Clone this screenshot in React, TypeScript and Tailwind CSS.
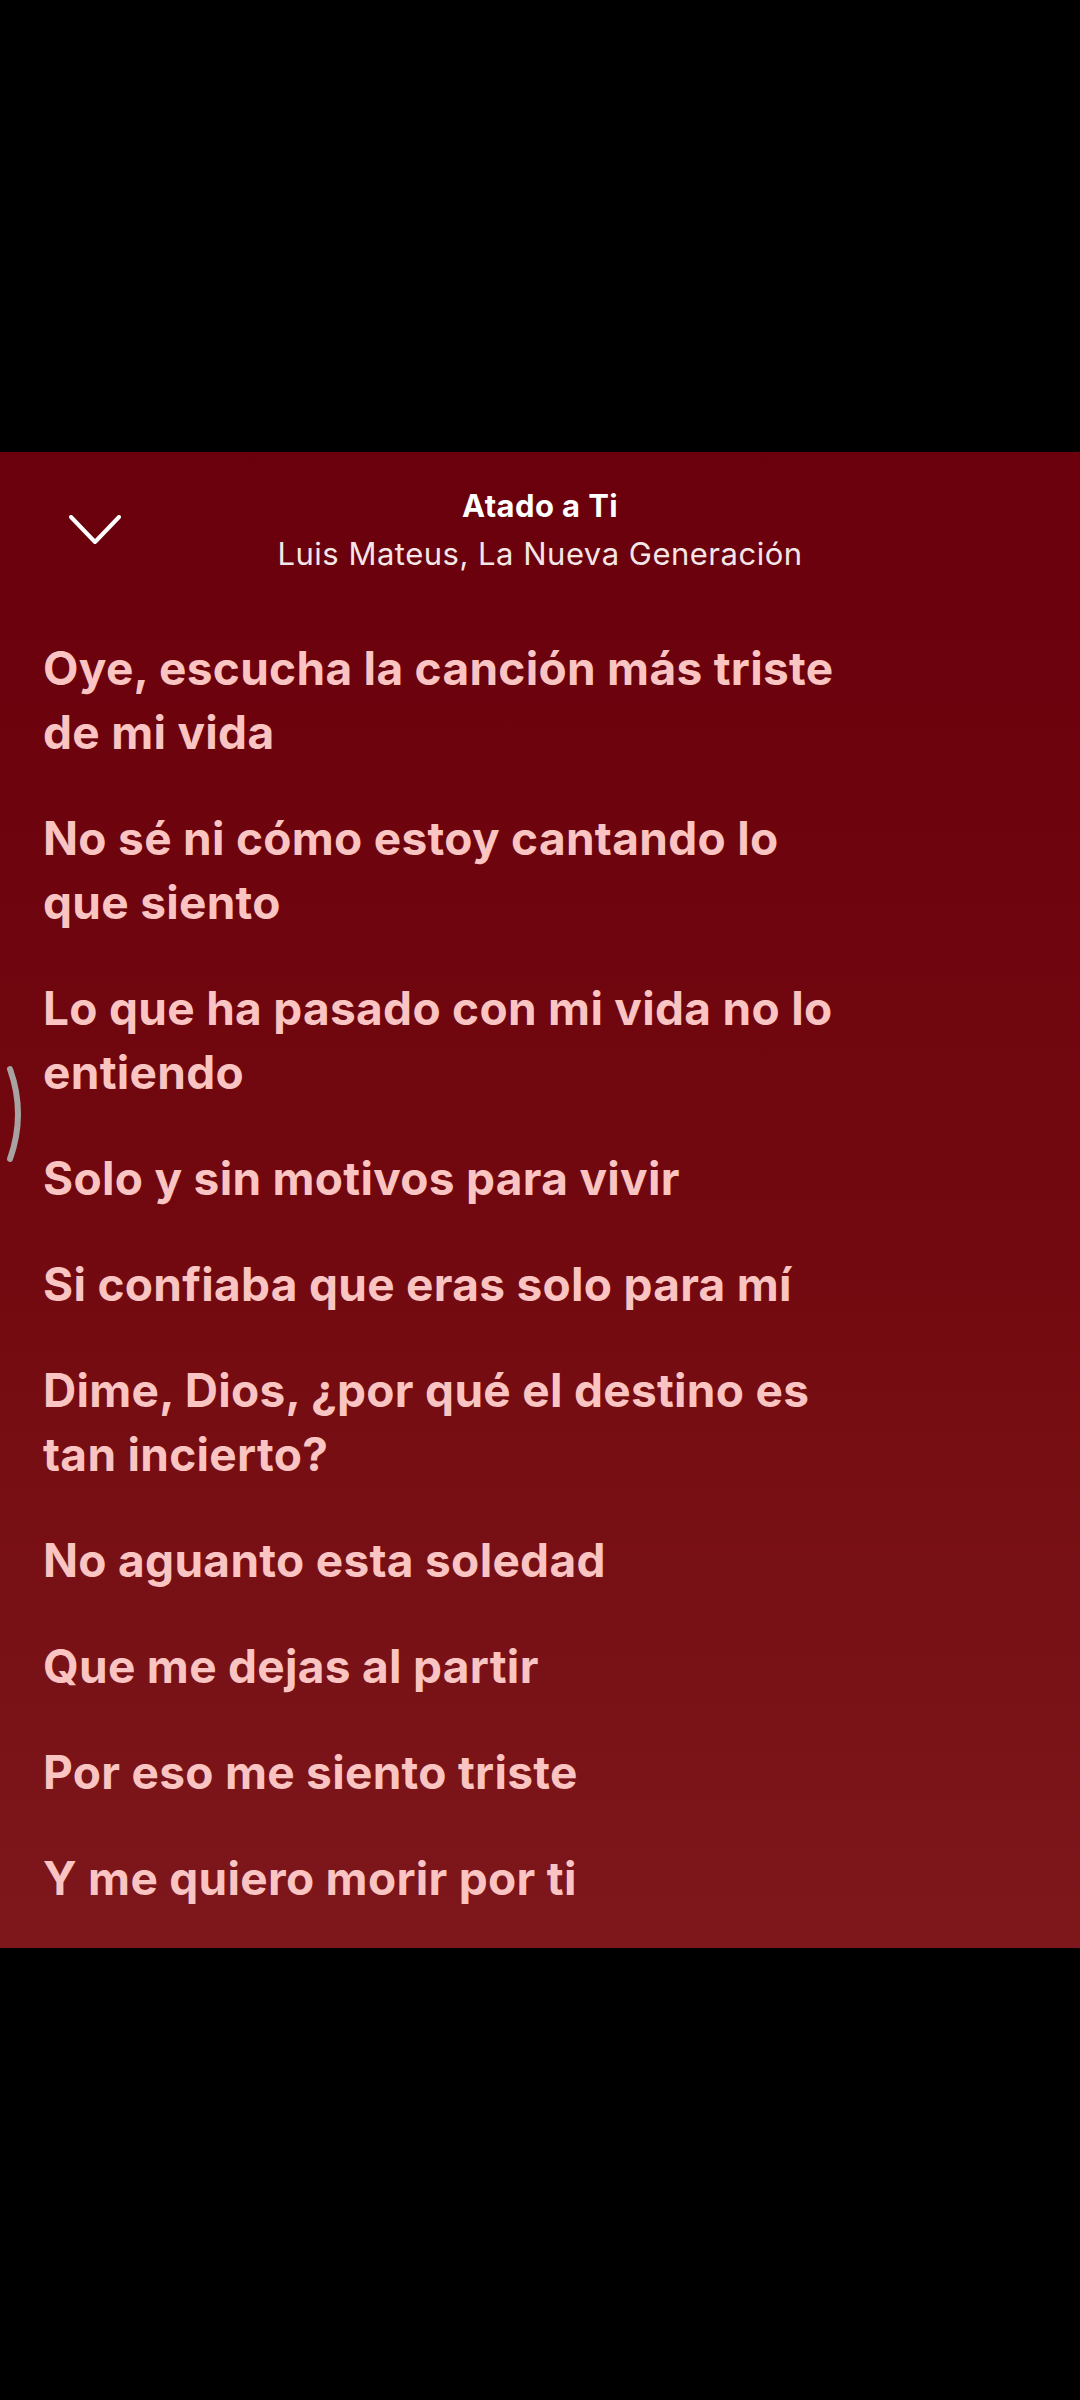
import React from 'react';

const lyrics: string[][] = [
  ['Oye, escucha la canción más triste', 'de mi vida'],
  ['No sé ni cómo estoy cantando lo', 'que siento'],
  ['Lo que ha pasado con mi vida no lo', 'entiendo'],
  ['Solo y sin motivos para vivir'],
  ['Si confiaba que eras solo para mí'],
  ['Dime, Dios, ¿por qué el destino es', 'tan incierto?'],
  ['No aguanto esta soledad'],
  ['Que me dejas al partir'],
  ['Por eso me siento triste'],
  ['Y me quiero morir por ti'],
];

function ChevronDown() {
  return (
    <svg width="52" height="30" viewBox="0 0 52 30" fill="none">
      <polyline
        points="2,2 26,27 50,2"
        stroke="#ffffff"
        strokeWidth="4"
        strokeLinecap="round"
        strokeLinejoin="round"
      />
    </svg>
  );
}

export default function App() {
  return (
    <div className="min-h-screen w-[1080px] bg-black font-['Inter','Liberation_Sans',sans-serif]">
      <div className="h-[452px]" />

      <div className="relative h-[1496px] bg-gradient-to-b from-[#69000c] via-[#72080f] to-[#7d171c]">
        {/* cabecera */}
        <header className="grid grid-cols-[180px_1fr_180px] pt-[36px]">
          <div className="flex items-center pl-[69px]">
            <ChevronDown />
          </div>
          <div className="flex flex-col items-center text-white">
            <h1 className="text-[31px] font-bold leading-[36px] tracking-[0.4px]">Atado a Ti</h1>
            <p className="mt-[12px] text-[31px] leading-[36px] text-[#f4e6e6] tracking-[0.5px]">
              Luis Mateus, La Nueva Generación
            </p>
          </div>
          <div />
        </header>

        {/* letra */}
        <div className="mt-[64px] flex flex-col gap-[42px] px-[43px]">
          {lyrics.map((lines, i) => (
            <p key={i} className="text-[46px] font-bold leading-[64px] tracking-[0.3px] text-[#f9c4c1]">
              {lines.map((l, j) => (
                <span key={j} className="block">
                  {l}
                </span>
              ))}
            </p>
          ))}
        </div>

        {/* indicador de gesto */}
        <svg
          className="absolute left-[6px] top-[613px]"
          width="22"
          height="98"
          viewBox="0 0 22 98"
          fill="none"
        >
          <path d="M4 4 Q20 49 4 94" stroke="#a9a2a2" strokeWidth="6" strokeLinecap="round" />
        </svg>
      </div>

      <div className="h-[452px]" />
    </div>
  );
}
